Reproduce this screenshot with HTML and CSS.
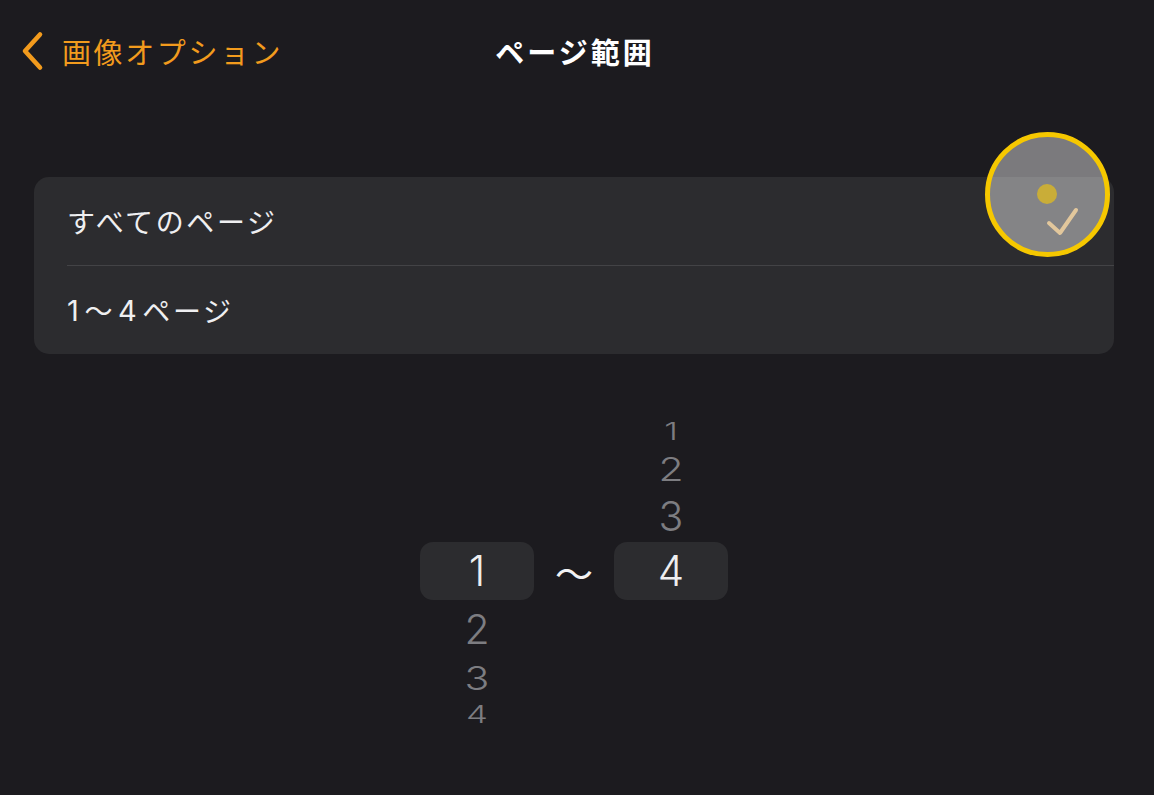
FILE: index.html
```html
<!DOCTYPE html>
<html lang="ja">
<head>
<meta charset="utf-8">
<title>ページ範囲</title>
<link rel="stylesheet" href="styles.css">
</head>
<body>
<div class="screen">
  <header class="navbar">
    <div class="nav-left">
      <svg class="chevron" width="24" height="40" viewBox="0 0 24 40"><path d="M20 3.5 L5 20 L20 36.5" fill="none" stroke="#f29b1d" stroke-width="4.6" stroke-linecap="round" stroke-linejoin="round"/></svg>
      <span class="back-label">画像オプション</span>
    </div>
    <h1 class="title">ページ範囲</h1>
    <div class="nav-right"></div>
  </header>

  <section class="card">
    <div class="row">すべてのページ</div>
    <div class="row"><span class="digit">1</span>〜<span class="digit">4</span>ページ</div>
    <div class="touch">
      <span class="dot"></span>
      <svg class="check" width="50" height="50" viewBox="0 0 50 50"><path d="M9 31 L20 41 L36 18" fill="none" stroke="#e2c79c" stroke-width="4" stroke-linecap="round" stroke-linejoin="round"/></svg>
    </div>
  </section>

  <section class="picker">
    <div class="sel-box left-box"></div>
    <div class="sel-box right-box"></div>
    <span class="num sel l1">1</span>
    <span class="num near l2">2</span>
    <span class="num mid l3">3</span>
    <span class="num far l4">4</span>
    <span class="tilde">〜</span>
    <span class="num far r1">1</span>
    <span class="num mid r2">2</span>
    <span class="num near r3">3</span>
    <span class="num sel r4">4</span>
  </section>
</div>
</body>
</html>
```
FILE: styles.css
```css
html, body {
  margin: 0;
  padding: 0;
  background: #1c1b1f;
}
body {
  width: 1154px;
  height: 795px;
  overflow: hidden;
  font-family: "Inter", "Noto Sans CJK JP", sans-serif;
  color: #f2f2f4;
}
.screen {
  display: flex;
  flex-direction: column;
}
.navbar {
  display: grid;
  grid-template-columns: 1fr auto 1fr;
  align-items: center;
  height: 102px;
}
.nav-left {
  display: flex;
  align-items: center;
  gap: 18px;
  padding-left: 20px;
  color: #f29b1d;
}
.chevron {
  display: block;
}
.back-label {
  font-family: "Noto Sans CJK JP", sans-serif;
  font-size: 29px;
  letter-spacing: 2.6px;
  line-height: 1;
}
.title {
  margin: 0;
  font-family: "Noto Sans CJK JP", sans-serif;
  font-size: 29px;
  font-weight: 700;
  line-height: 1;
  letter-spacing: 3px;
  color: #ffffff;
  transform: translateX(-2px);
}
.card {
  position: relative;
  margin: 75px 40px 0 34px;
  background: #2c2c2f;
  border-radius: 15px;
  display: flex;
  flex-direction: column;
}
.row {
  height: 88px;
  display: flex;
  align-items: center;
  margin-left: 33px;
  font-family: "Noto Sans CJK JP", sans-serif;
  font-size: 28px;
  letter-spacing: 2.6px;
  color: #efeff1;
}
.digit {
  font-family: "Inter", sans-serif;
  font-size: 29px;
  padding: 0 3px;
}
.digit:first-child {
  padding-left: 0;
}
.row + .row {
  border-top: 1px solid #434346;
}
.touch {
  position: absolute;
  left: 951px;
  top: -45px;
  width: 115px;
  height: 115px;
  border: 5px solid #f6c800;
  border-radius: 50%;
  background: rgba(255, 255, 255, 0.42);
}
.dot {
  position: absolute;
  left: 47px;
  top: 47px;
  width: 20px;
  height: 20px;
  border-radius: 50%;
  background: #c9ad38;
}
.check {
  position: absolute;
  left: 50px;
  top: 55px;
}
.picker {
  position: relative;
  margin-top: 60px;
  align-self: center;
  display: grid;
  grid-template-columns: 114px 80px 114px;
  grid-template-rows: 34px 43px 51px 58px 58px 40px 32px;
  transform: translateX(-3px);
}
.sel-box {
  grid-row: 4;
  background: #2c2c2f;
  border-radius: 13px;
}
.left-box { grid-column: 1; }
.right-box { grid-column: 3; }
.num {
  display: flex;
  align-items: center;
  justify-content: center;
  font-family: "Inter", sans-serif;
  line-height: 1;
}
.sel {
  grid-row: 4;
  font-size: 42px;
  font-weight: 300;
  color: #eeeef0;
}
.near, .mid, .far {
  font-size: 41px;
  font-weight: 300;
  color: #7d7d81;
}
.mid { transform: scaleY(0.8); }
.far { transform: scale(0.85, 0.58); }
.l1 { grid-column: 1; }
.l2 { grid-column: 1; grid-row: 5; }
.l3 { grid-column: 1; grid-row: 6; }
.l4 { grid-column: 1; grid-row: 7; }
.r1 { grid-column: 3; grid-row: 1; }
.r2 { grid-column: 3; grid-row: 2; }
.r3 { grid-column: 3; grid-row: 3; }
.r4 { grid-column: 3; }
.tilde {
  grid-column: 2;
  grid-row: 4;
  display: flex;
  align-items: center;
  justify-content: center;
  font-family: "Noto Sans CJK JP", sans-serif;
  font-size: 38px;
  color: #f2f2f4;
}
```
